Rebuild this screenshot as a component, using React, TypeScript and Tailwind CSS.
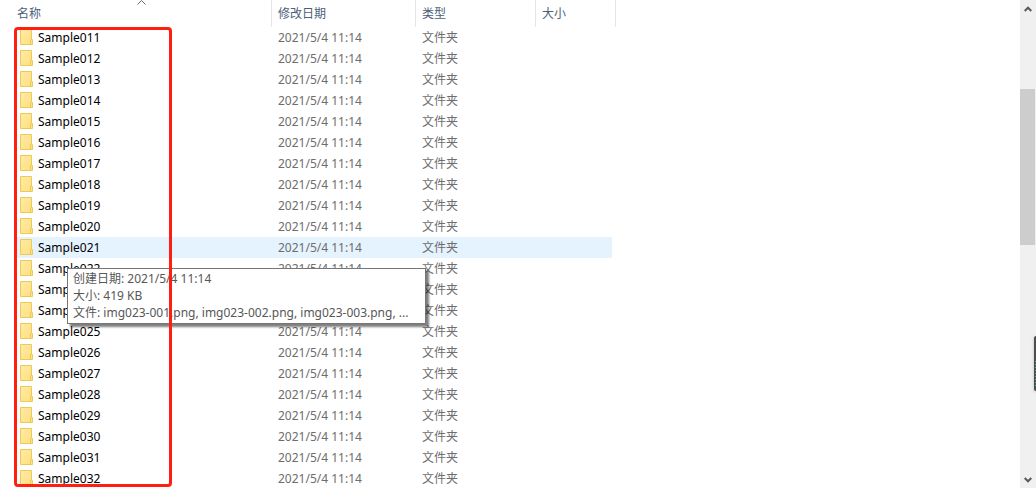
import React from "react"

const folders = Array.from({ length: 22 }, (_, i) => `Sample0${i + 11}`)
const hovered = "Sample021"

const columns = [
  { label: "名称", cell: "w-[258px]", pad: "pl-[3px]", sorted: true },
  { label: "修改日期", cell: "w-36", pad: "pl-[6px]", sorted: false },
  { label: "类型", cell: "w-[120px]", pad: "pl-[6px]", sorted: false },
  { label: "大小", cell: "w-20", pad: "pl-[6px]", sorted: false },
]

function FolderIcon() {
  return (
    <svg width="13" height="17" viewBox="0 0 13 17" className="shrink-0" aria-hidden="true">
      <defs>
        <linearGradient id="folder" x1="0" y1="0" x2="1" y2="1">
          <stop offset="0" stopColor="#ffeaa6" />
          <stop offset="1" stopColor="#ffe07f" />
        </linearGradient>
      </defs>
      <path d="M.5.5h11v10h1v5H.5z" fill="url(#folder)" stroke="#ecca5a" />
      <path d="M10.500 15.500v-5h1" fill="none" stroke="#ecca5a" />
    </svg>
  )
}

function Chevron({ down = false }: { down?: boolean }) {
  return (
    <svg width="8" height="6" viewBox="0 0 8 6" className={down ? "rotate-180" : ""} aria-hidden="true">
      <path d="M.7 5 4 1.700 7.300 5" fill="none" stroke="#5a5a5a" strokeWidth="2" />
    </svg>
  )
}

function ScrollBar() {
  return (
    <div className="flex w-4 shrink-0 flex-col bg-[#f0f0f0]">
      <button aria-label="向上滚动" className="flex h-[17px] w-[15px] items-center justify-center">
        <Chevron />
      </button>
      <div className="grow-[72]" />
      <div className="w-[15px] grow-[156] bg-[#cdcdcd]" />
      <div className="grow-[226]" />
      <button aria-label="向下滚动" className="flex h-[17px] w-[15px] items-center justify-center">
        <Chevron down />
      </button>
    </div>
  )
}

export default function App() {
  return (
    <main className="relative flex h-screen overflow-hidden bg-white font-['Noto_Sans','Noto_Sans_CJK_SC',sans-serif] text-[12px] leading-[17px] text-[#6d6d6d]">
      <div className="relative min-w-0 flex-1 overflow-hidden pl-[14px]">
        <table className="w-[602px] table-fixed border-separate border-spacing-0">
          <thead>
            <tr className="h-[27px]">
              {columns.map((col) => (
                <th
                  key={col.label}
                  className={`${col.cell} ${col.pad} relative border-r border-[#e5e5e5] p-0 text-left align-middle font-normal text-[#4c607a]`}
                >
                  {col.sorted && (
                    <svg width="9" height="5" viewBox="0 0 9 5" className="absolute top-0 left-[123px]" aria-hidden="true">
                      <path d="M.5 4.500l4-4 4 4" fill="none" stroke="#6d6d6d" />
                    </svg>
                  )}
                  <button className="block">{col.label}</button>
                </th>
              ))}
            </tr>
          </thead>
          <tbody>
            {folders.map((name) => (
              <tr key={name} className={name === hovered ? "h-[21px] bg-[#e5f3ff]" : "h-[21px]"}>
                <td className="p-0 pl-[6px]">
                  <div className="flex items-center gap-[5px] text-black">
                    <FolderIcon />
                    {name}
                  </div>
                </td>
                <td className="p-0 pl-[6px]">2021/5/4 11:14</td>
                <td className="p-0 pl-[6px]">文件夹</td>
                <td className="border-r-4 border-white p-0" />
              </tr>
            ))}
          </tbody>
        </table>

        {/* Hover tooltip */}
        <div
          role="tooltip"
          className="absolute top-[268px] left-[67px] w-[359px] border border-[#767676] bg-white px-[5px] pt-px pb-[2px] whitespace-nowrap text-[#575757] shadow-[3px_3px_2px_rgba(0,0,0,0.5)]"
        >
          <p>创建日期: 2021/5/4 11:14</p>
          <p>大小: 419 KB</p>
          <p>文件: img023-001.png, img023-002.png, img023-003.png, ...</p>
        </div>

        {/* Marker around the name column */}
        <div className="pointer-events-none absolute top-[27px] bottom-px left-[14px] w-[158px] rounded-[4px] border-3 border-[#ff1e10]" />
      </div>

      <ScrollBar />

      {/* Docked widget peeking in from the edge */}
      <div className="absolute top-[336px] right-0 flex h-[55px] w-[2px] flex-col justify-end rounded-l-[2px] bg-[#4d4d4f] pb-[3px] pl-px shadow-[0_1px_3px_rgba(0,0,0,0.25)]">
        <div className="h-[27px] bg-[repeating-linear-gradient(#4fae7c_0_1px,#4d4d4f_1px_3px)]" />
      </div>
    </main>
  )
}
